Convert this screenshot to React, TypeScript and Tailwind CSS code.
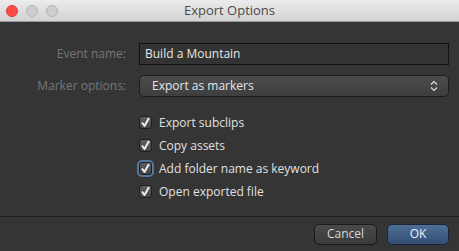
const options = [
  { label: "Export subclips", focused: false },
  { label: "Copy assets", focused: false },
  { label: "Add folder name as keyword", focused: true },
  { label: "Open exported file", focused: false },
];

const CheckRow = ({ label, focused }: { label: string; focused: boolean }) => (
  <div className="flex items-center h-[23px] gap-[7px]">
    <div
      className={`w-[13px] h-[13px] rounded-[3px] flex items-center justify-center bg-gradient-to-b from-[#5e5e5e] to-[#464646] border border-[#1e1e1e] ${
        focused ? "outline outline-2 outline-[#56799f]" : ""
      }`}
    >
      <svg width="11" height="11" viewBox="0 0 11 11" fill="none" stroke="#eeeeee" strokeWidth="2" strokeLinejoin="round">
        <path d="M2 5.5 L4.5 9 L9 1" />
      </svg>
    </div>
    <span className="text-[12px] text-[#e0e0e0]">{label}</span>
  </div>
);

export default function App() {
  return (
    <div
      className="w-[459px] h-[251px] flex flex-col bg-[#353535]"
      style={{ fontFamily: '"Open Sans", "DejaVu Sans", sans-serif' }}
    >
      <div className="relative h-[22px] flex items-center bg-gradient-to-b from-[#ececec] to-[#d2d2d2] border-b border-[#9a9a9a]">
        <div className="flex gap-[8px] pl-[6px]">
          <div className="w-[12px] h-[12px] rounded-full bg-[#fc4e47] border border-[#de3a35]" />
          <div className="w-[12px] h-[12px] rounded-full bg-[#cecece] border border-[#b5b5b5]" />
          <div className="w-[12px] h-[12px] rounded-full bg-[#cecece] border border-[#b5b5b5]" />
        </div>
        <div className="absolute inset-0 flex items-center justify-center text-[13px] text-[#4a4a4a]">
          Export Options
        </div>
      </div>

      <div className="flex flex-col px-[10px] pt-[21px]">
        <div className="flex items-center h-[22px]">
          <div className="w-[116px] text-right text-[12px] text-[#777]">Event name:</div>
          <div className="ml-[13px] w-[310px] h-[22px] flex items-center px-[5px] bg-[#333] border border-[#111] text-[12px] text-[#e6e6e6]">
            Build a Mountain
          </div>
        </div>
        <div className="flex items-center h-[22px] mt-[10px]">
          <div className="w-[116px] text-right text-[12px] text-[#777]">Marker options:</div>
          <div className="ml-[13px] w-[310px] h-[22px] flex items-center justify-between pl-[12px] pr-[10px] rounded-[5px] bg-gradient-to-b from-[#4c4c4c] to-[#3e3e3e] border border-[#1c1c1c] text-[12px] text-[#e6e6e6]">
            <span>Export as markers</span>
            <svg width="8" height="12" viewBox="0 0 8 12" fill="none" stroke="#ddd" strokeWidth="1.2">
              <path d="M1 4.5 L4 1.5 L7 4.5" />
              <path d="M1 7.5 L4 10.5 L7 7.5" />
            </svg>
          </div>
        </div>

        <div className="flex flex-col ml-[129px] mt-[14px]">
          {options.map((o) => (
            <CheckRow key={o.label} label={o.label} focused={o.focused} />
          ))}
        </div>
      </div>

      <div className="mt-auto border-t border-[#1f1f1f] h-[35px] flex items-center justify-end gap-[10px] pr-[10px]">
        <button className="w-[63px] h-[21px] rounded-[5px] bg-gradient-to-b from-[#4a4a4a] to-[#3a3a3a] border border-[#1a1a1a] text-[12px] text-[#d8d8d8]">
          Cancel
        </button>
        <button className="w-[62px] h-[21px] rounded-[5px] bg-gradient-to-b from-[#4f6f98] to-[#334e74] border border-[#1a2638] text-[12px] text-[#eef2f8]">
          OK
        </button>
      </div>
    </div>
  );
}
